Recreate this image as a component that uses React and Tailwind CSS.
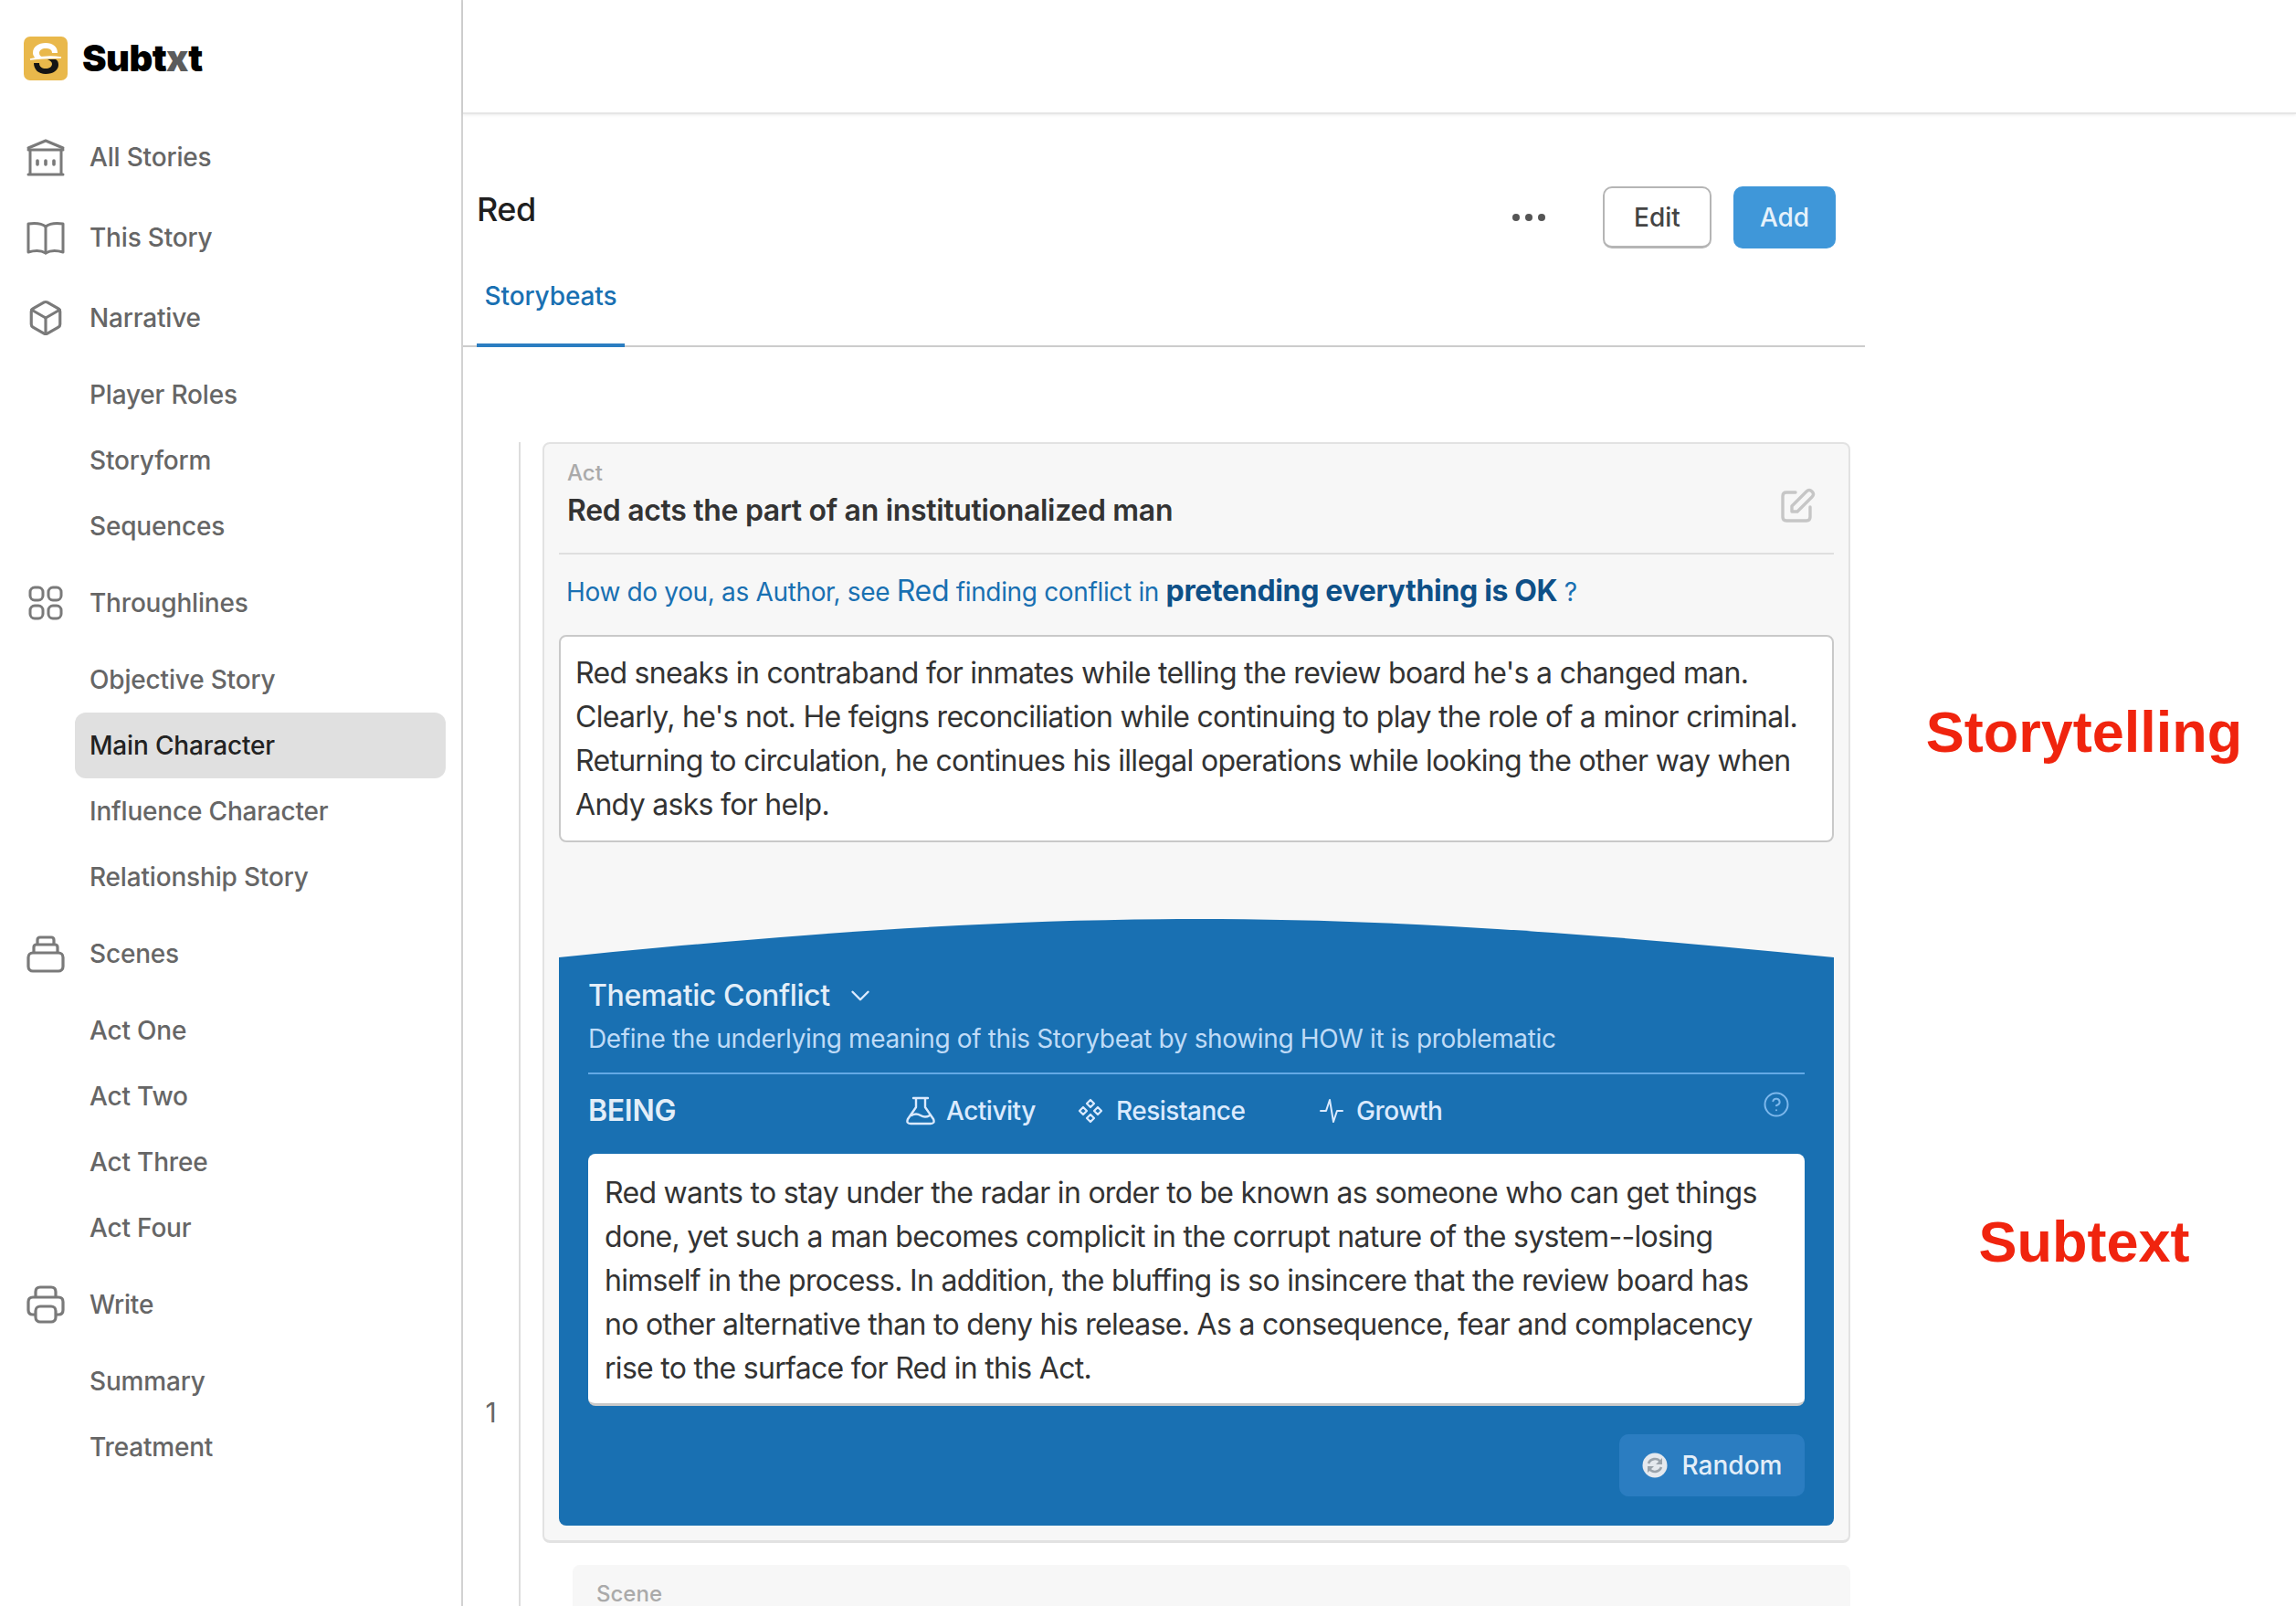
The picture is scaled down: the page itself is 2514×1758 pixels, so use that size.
import React from "react";
import { Box, ChevronDown, CircleHelp } from "lucide-react";

function BankIcon() {
  return (
    <svg width="42" height="42" viewBox="0 0 42 42" fill="none" stroke="#7a7a7a" strokeWidth="3" strokeLinecap="round" strokeLinejoin="round">
      <path d="M2 11 L21 3 L40 11" />
      <path d="M2 13 H40" />
      <path d="M4 14 V39 M38 14 V39 M2 40 H40" />
      <path d="M12 25 V29 M21 25 V29 M30 25 V29" strokeWidth="3.6" />
    </svg>
  );
}

function BookIcon() {
  return (
    <svg width="42" height="42" viewBox="0 0 42 42" fill="none" stroke="#7a7a7a" strokeWidth="3" strokeLinecap="round" strokeLinejoin="round">
      <path d="M21 9 C16 5 9 5 2 6 V37 C9 35 16 35 21 38 C26 35 33 35 40 37 V6 C33 5 26 5 21 9 Z" />
      <path d="M21 9 V38" />
    </svg>
  );
}

function GridIcon() {
  return (
    <svg width="42" height="42" viewBox="0 0 42 42" fill="none" stroke="#7a7a7a" strokeWidth="3">
      <rect x="4" y="4" width="14" height="14" rx="5" />
      <rect x="24" y="4" width="14" height="14" rx="5" />
      <rect x="4" y="24" width="14" height="14" rx="5" />
      <rect x="24" y="24" width="14" height="14" rx="5" />
    </svg>
  );
}

function StackIcon() {
  return (
    <svg width="42" height="42" viewBox="0 0 42 42" fill="none" stroke="#7a7a7a" strokeWidth="3.2">
      <rect x="2" y="20" width="38" height="20" rx="5" />
      <path d="M8 20 V14 Q8 11 11 11 H31 Q34 11 34 14 V20" />
      <path d="M12 11 V6 Q12 3 15 3 H27 Q30 3 30 6 V11" />
    </svg>
  );
}

function PrinterIcon() {
  return (
    <svg width="42" height="42" viewBox="0 0 42 42" fill="none" stroke="#7a7a7a" strokeWidth="3.2" strokeLinejoin="round">
      <path d="M10 13 V7 Q10 2 15 2 H27 Q32 2 32 7 V13" />
      <path d="M10 32 H7 Q2 32 2 27 V18 Q2 13 7 13 H35 Q40 13 40 18 V27 Q40 32 35 32 H32" />
      <rect x="10" y="23" width="22" height="17" rx="5" />
    </svg>
  );
}

function FlaskIcon() {
  return (
    <svg width="34" height="32" viewBox="0 0 34 32" fill="none" stroke="#dbeafe" strokeWidth="2.4" strokeLinecap="round" strokeLinejoin="round">
      <path d="M9 2 H25 M12 2 V12 L3 25 Q1 30 6 30 H28 Q33 30 31 25 L22 12 V2" />
      <path d="M7 21 Q12 18 17 21 T27 21" />
    </svg>
  );
}

function PenIcon() {
  return (
    <svg width="38" height="38" viewBox="0 0 38 38" fill="none" stroke="#c6c6c6" strokeWidth="3.4" strokeLinecap="round" strokeLinejoin="round" className="mt-[33px] mr-[20px] shrink-0">
      <path d="M16 5 H6 Q2 5 2 9 V32 Q2 36 6 36 H28 Q32 36 32 32 V21" />
      <path d="M12 20 L28 4 Q31 1 34 4 Q37 7 34 10 L18 26 H12 Z" />
    </svg>
  );
}

function DiamondsIcon() {
  return (
    <svg width="28" height="28" viewBox="0 0 28 28" fill="none" stroke="#dbeafe" strokeWidth="2.2" strokeLinejoin="round">
      <path d="M14 2 L18 6 L14 10 L10 6 Z" />
      <path d="M14 18 L18 22 L14 26 L10 22 Z" />
      <path d="M6 10 L10 14 L6 18 L2 14 Z" />
      <path d="M22 10 L26 14 L22 18 L18 14 Z" />
    </svg>
  );
}

function PulseIcon() {
  return (
    <svg width="26" height="30" viewBox="0 0 26 30" fill="none" stroke="#dbeafe" strokeWidth="2" strokeLinecap="round" strokeLinejoin="round">
      <path d="M1 15 H7 L11 3 L15 27 L19 15 H25" />
    </svg>
  );
}

function RandomIcon() {
  return (
    <svg width="28" height="28" viewBox="0 0 28 28" fill="none">
      <circle cx="14" cy="14" r="13.5" fill="#e5e9ee" />
      <path d="M7 12 A7.5 7.5 0 0 1 20 10 M21 16 A7.5 7.5 0 0 1 8 18" stroke="#9aa3ab" strokeWidth="2.6" />
      <path d="M22 6 V13 H15 Z M6 22 V15 H13 Z" fill="#9aa3ab" />
    </svg>
  );
}

function Logo() {
  return (
    <svg width="48" height="48" viewBox="0 0 48 48">
      <rect width="48" height="48" rx="7" fill="#e9b84b" />
      <path d="M37 18 H31 C31 14 28 13 24 13 C20 13 17 15 17 18 C17 21 19 22 22 23 L13 24 C11 22 10 20 10 18 C10 11 16 7 24 7 C32 7 37 11 37 18 Z" fill="#fff" />
      <path d="M11 29 H17 C17 33 20 35 24 35 C28 35 31 33 31 30 C31 28 29 26 26 25 L35 25 C37 26 38 28 38 31 C38 37 32 41 24 41 C16 41 11 36 11 29 Z" fill="#141414" />
      <path d="M7 25 C18 22 30 21 41 23 C30 23 18 24 7 25 Z" fill="#fff" stroke="#fff" strokeWidth="1.5" />
    </svg>
  );
}

function NavHead({ icon, label }) {
  return (
    <div className="flex items-center h-[88px] pl-[29px]">
      <div className="w-[42px] h-[42px] flex items-center justify-center shrink-0">{icon}</div>
      <span className="ml-[27px] text-[#666666] font-medium">{label}</span>
    </div>
  );
}

function NavSub({ label, active }) {
  return (
    <div className={`flex items-center h-[72px] ml-[82px] mr-[17px] pl-[16px] rounded-[12px] font-medium ${active ? "bg-[#e0e0e0] text-[#222222]" : "text-[#666666]"}`}>
      {label}
    </div>
  );
}

function NavGroup({ items, active }) {
  return (
    <div className="py-[4px]">
      {items.map((item) => (
        <NavSub key={item} label={item} active={item === active} />
      ))}
    </div>
  );
}

function Sidebar() {
  return (
    <aside className="w-[507px] h-full shrink-0 border-r-2 border-[#d2d2d2] text-[28px] tracking-[-0.18px] overflow-hidden">
      <div className="flex items-center pl-[26px] h-[128px]">
        <Logo />
        <span className="ml-[16px] text-[40px] font-black text-black tracking-[-0.6px]">
          Subt<span className="text-[#5c5c5c]">x</span>t
        </span>
      </div>
      <NavHead icon={<BankIcon />} label="All Stories" />
      <NavHead icon={<BookIcon />} label="This Story" />
      <NavHead icon={<Box size={42} color="#7a7a7a" strokeWidth={1.8} />} label="Narrative" />
      <NavGroup items={["Player Roles", "Storyform", "Sequences"]} />
      <NavHead icon={<GridIcon />} label="Throughlines" />
      <NavGroup items={["Objective Story", "Main Character", "Influence Character", "Relationship Story"]} active="Main Character" />
      <NavHead icon={<StackIcon />} label="Scenes" />
      <NavGroup items={["Act One", "Act Two", "Act Three", "Act Four"]} />
      <NavHead icon={<PrinterIcon />} label="Write" />
      <NavGroup items={["Summary", "Treatment"]} />
    </aside>
  );
}

function CurveTop() {
  return (
    <svg className="block w-full h-[42px]" viewBox="0 0 1396 42" preserveAspectRatio="none">
      <path d="M0 42 C300 12 500 0 698 0 C896 0 1096 12 1396 42 Z" fill="#1970b2" />
    </svg>
  );
}

function TabItem({ icon, label, className }) {
  return (
    <div className={`flex items-center text-[#dbeafe] font-medium tracking-[-0.5px] ${className}`}>
      {icon}
      <span>{label}</span>
    </div>
  );
}

function StoryCard() {
  return (
    <div className="border-2 border-b-[3px] border-[#e2e2e2] rounded-[8px] bg-[#f7f7f7] px-[16px] pb-[16px] pt-[15px]">
      <div className="flex justify-between items-start pl-[9px]">
        <div>
          <div className="text-[#aaaaaa] text-[24px] font-medium leading-[34px]">Act</div>
          <div className="text-[#333333] text-[32px] font-semibold leading-[48px] tracking-[-0.32px]">
            Red acts the part of an institutionalized man
          </div>
        </div>
        <PenIcon />
      </div>
      <div className="border-b-2 border-[#dfdfdf] mt-[22px]" />
      <div className="flex items-baseline pl-[8px] mt-[16px] h-[48px] text-[#1970b2] text-[28px] leading-[48px] whitespace-pre tracking-[-0.34px]">
        How do you, as Author, see <span className="text-[32px]">Red</span> finding conflict in <span className="text-[32px] font-bold text-[#0e5087]">pretending everything is OK</span> ?
      </div>
      <div className="mt-[24px] bg-white border-2 border-[#c9c9c9] rounded-[8px] px-[16px] pt-[16px] h-[227px] text-[#333333] text-[32px] leading-[48px] tracking-[-0.7px]">
        Red sneaks in contraband for inmates while telling the review board he's a changed man. Clearly, he's not. He feigns reconciliation while continuing to play the role of a minor criminal. Returning to circulation, he continues his illegal operations while looking the other way when Andy asks for help.
      </div>
      <div className="mt-[84px]">
        <CurveTop />
        <div className="bg-[#1970b2] rounded-b-[8px] px-[32px] pb-[32px]">
          <div className="flex items-center gap-[16px] pt-[24px] h-[60px] text-[#e3eef8] text-[32px] font-medium tracking-[-0.38px]">
            Thematic Conflict
            <ChevronDown size={34} color="#dbeafe" strokeWidth={1.7} />
          </div>
          <div className="text-[#bfdbf7] text-[28px] leading-[48px] mt-[5px] tracking-[-0.36px]">
            Define the underlying meaning of this Storybeat by showing HOW it is problematic
          </div>
          <div className="border-b-2 border-[#63a9e6] mt-[13px]" />
          <div className="flex items-center h-[87px] pb-[8px] text-[28px] relative">
            <span className="text-[#e3eef8] text-[32px] font-semibold w-[347px] tracking-[-0.3px]">BEING</span>
            <TabItem icon={<FlaskIcon />} label="Activity" className="w-[189px] gap-[11px]" />
            <TabItem icon={<DiamondsIcon />} label="Resistance" className="w-[265px] gap-[14px]" />
            <TabItem icon={<PulseIcon />} label="Growth" className="gap-[14px]" />
            <CircleHelp size={30} color="#7db8ec" strokeWidth={1.6} className="absolute right-[16px] top-[18px]" />
          </div>
          <div className="bg-white border-b-[3px] border-[#c9c9c9] rounded-[8px] px-[18px] pt-[19px] h-[276px] text-[#333333] text-[32px] leading-[48px] tracking-[-0.7px]">
            Red wants to stay under the radar in order to be known as someone who can get things done, yet such a man becomes complicit in the corrupt nature of the system--losing himself in the process. In addition, the bluffing is so insincere that the review board has no other alternative than to deny his release. As a consequence, fear and complacency rise to the surface for Red in this Act.
          </div>
          <div className="flex justify-end mt-[31px]">
            <div className="flex items-center justify-center gap-[16px] w-[203px] h-[68px] rounded-[10px] bg-[#2b7dc1] text-[#e3eef8] text-[28px] font-medium">
              <RandomIcon />
              Random
            </div>
          </div>
        </div>
      </div>
    </div>
  );
}

export default function App() {
  return (
    <div className="flex h-[1758px] w-[2514px] overflow-hidden bg-white" style={{ fontFamily: "Inter, sans-serif" }}>
      <Sidebar />
      <main className="flex-1 min-w-0">
        <div className="h-[125px] border-b-2 border-[#e6e6e6] shadow-[0_1px_3px_rgba(0,0,0,0.08)]" />
        <div className="w-[1535px]">
          <div className="flex items-start justify-between h-[149px] pl-[15px] pr-[32px]">
            <div className="text-[36px] leading-[44px] font-medium text-[#1f1f1f] mt-[82px] tracking-[-0.5px]">Red</div>
            <div className="flex items-center mt-[79px]">
              <div className="flex gap-[6px] mr-[63px]">
                <span className="w-[8px] h-[8px] rounded-full bg-[#555555]" />
                <span className="w-[8px] h-[8px] rounded-full bg-[#555555]" />
                <span className="w-[8px] h-[8px] rounded-full bg-[#555555]" />
              </div>
              <div className="flex items-center justify-center w-[119px] h-[68px] border-2 border-b-[3px] border-[#b5b5b5] rounded-[10px] text-[#444444] text-[28px] font-medium">Edit</div>
              <div className="flex items-center justify-center w-[112px] h-[68px] ml-[24px] rounded-[10px] bg-[#3f97d9] text-[#e6f2fb] text-[28px] font-medium">Add</div>
            </div>
          </div>
          <div className="border-b-2 border-[#cccccc] h-[106px] pl-[15px]">
            <div className="w-[162px] h-[106px] border-b-4 border-[#2b7dc1] flex items-center justify-center pb-[2px] text-[#1970b2] text-[28px] font-medium tracking-[-0.1px]">Storybeats</div>
          </div>
        </div>
        <div className="flex mt-[104px]">
          <div className="w-[63px] shrink-0 border-r-2 border-[#dddddd] h-[1274px] text-center pt-[1044px] text-[#666666] text-[30px] leading-[36px]">
            1
          </div>
          <div className="w-[1432px] shrink-0 ml-[24px]">
            <StoryCard />
            <div className="ml-[33px] mt-[24px] bg-[#f7f7f7] rounded-[8px] px-[26px] pt-[20px] h-[100px] text-[#aaaaaa] text-[24px] leading-[24px] font-medium">Scene</div>
          </div>
          <div className="flex-1 flex flex-col items-center text-[#f0240e] font-bold text-[63px] leading-[76px] pl-[24px]" style={{ fontFamily: "'Liberation Sans', sans-serif" }}>
            <div className="mt-[279px] whitespace-nowrap">Storytelling</div>
            <div className="mt-[482px] whitespace-nowrap">Subtext</div>
          </div>
        </div>
      </main>
    </div>
  );
}
